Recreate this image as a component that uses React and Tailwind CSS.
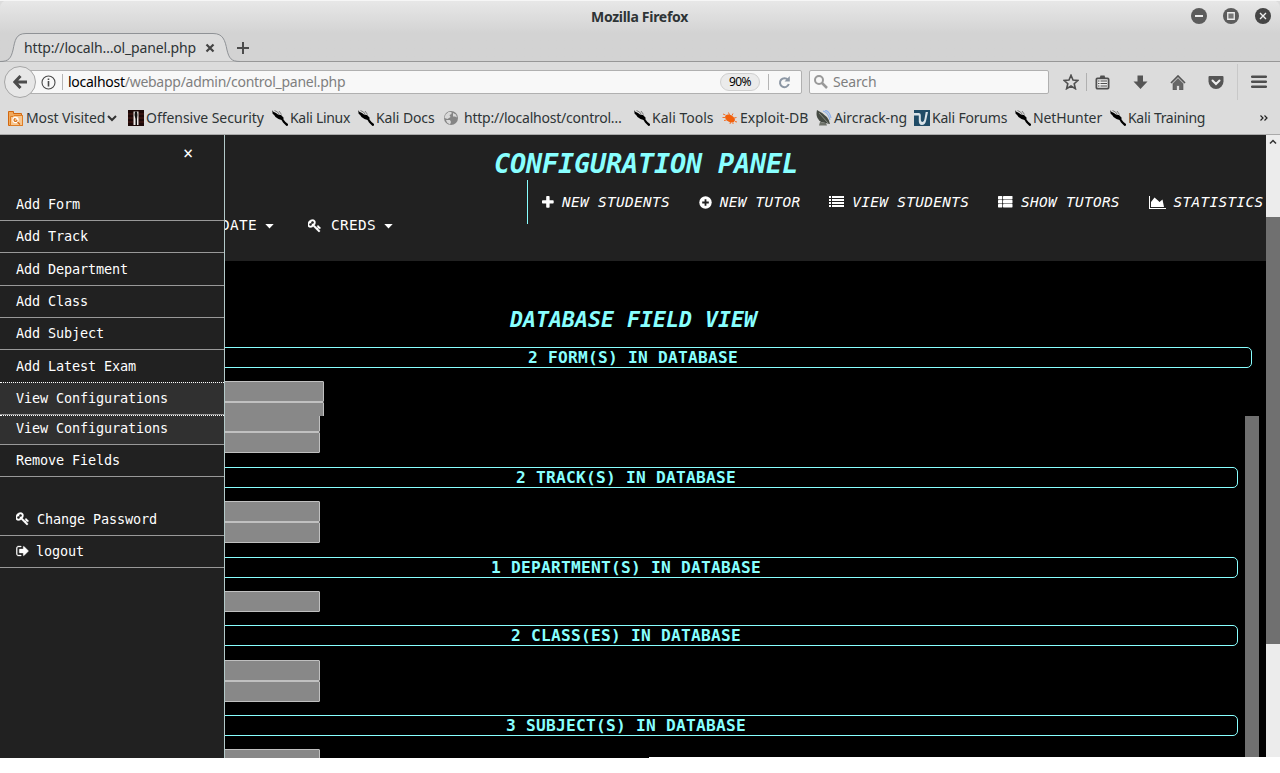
import React from "react";

const KEY =
  "M832 512q0-80-56-136t-136-56-136 56-56 136q0 42 19 83-41-19-83-19-80 0-136 56t-56 136 56 136 136 56 136-56 56-136q0-42-19-83 41 19 83 19 80 0 136-56t56-136zm851 704q0 17-49 66t-66 49q-9 0-28.5-16t-36.5-33-38.5-40-24.5-26l-96 96 220 220q28 28 28 68 0 42-39 81t-81 39q-40 0-68-28l-671-671q-176 131-365 131-163 0-265.5-102.5t-102.5-265.5q0-160 95-313t248-248 313-95q163 0 265.5 102.5t102.5 265.5q0 189-131 365l355 355 96-96q-3-3-26-24.5t-40-38.5-33-36.5-16-28.5q0-17 49-66t66-49q13 0 23 10 6 6 46 44.5t82 79.5 86.5 86 73 78 28.5 41z";
const SIGN_OUT =
  "M704 1440q0 4 1 20t.5 26.5-3 23.5-10 19.5-20.5 6.5h-320q-119 0-203.5-84.5t-84.5-203.5v-704q0-119 84.5-203.5t203.5-84.5h320q13 0 22.5 9.5t9.5 22.5q0 4 1 20t.5 26.5-3 23.5-10 19.5-20.5 6.5h-320q-66 0-113 47t-47 113v704q0 66 47 113t113 47h312l11.5 1 11.5 3 8 5.5 7 9 2 13.5zm928-544q0 26-19 45l-544 544q-19 19-45 19t-45-19-19-45v-288h-448q-26 0-45-19t-19-45v-384q0-26 19-45t45-19h448v-288q0-26 19-45t45-19 45 19l544 544q19 19 19 45z";

const ICONS = {
  plus: (
    <svg width="12" height="12" viewBox="0 0 12 12" fill="currentColor"><path d="M4.2 .8q0-.8.8-.8h1.8q.8 0 .8.8v3.4h3.3q.8 0 .8.8v1.8q0 .8-.8.8H7.600v3.300q0 .8-.8.8H5q-.8 0-.8-.8V7.600H.8Q0 7.600 0 6.800V5q0-.8.800-.8h3.400z" /></svg>
  ),
  circle: (
    <svg width="13" height="13" viewBox="0 0 13 13"><circle cx="6.500" cy="6.500" r="6.200" fill="currentColor" /><path d="M6.500 3.200v6.600M3.200 6.500h6.600" stroke="#212121" strokeWidth="1.800" /></svg>
  ),
  list: (
    <svg width="15" height="12" viewBox="0 0 15 12" fill="currentColor"><path d="M0 0h2v2H0zM3 0h12v2H3zM0 3h2v2H0zM3 3h12v2H3zM0 6h2v2H0zM3 6h12v2H3zM0 9h2v2H0zM3 9h12v2H3z" /></svg>
  ),
  thlist: (
    <svg width="15" height="12" viewBox="0 0 15 12" fill="currentColor"><rect width="4.300" height="3.400" rx=".6" /><rect x="5" width="9.500" height="3.400" rx=".6" /><rect y="4" width="4.300" height="3.400" rx=".6" /><rect x="5" y="4" width="9.500" height="3.400" rx=".6" /><rect y="8" width="4.300" height="3.400" rx=".6" /><rect x="5" y="8" width="9.500" height="3.400" rx=".6" /></svg>
  ),
  chart: (
    <svg width="17" height="13" viewBox="0 0 17 13" fill="currentColor"><path d="M0 0h1v12h16v1H0zM2 11V6l3.500-4.500 3.500 3 1.500 1.500L13.500 3.500 15 11z" /></svg>
  ),
};

const NAV = [
  ["plus", "NEW STUDENTS", "w-5"],
  ["circle", "NEW TUTOR", "w-[21px]"],
  ["list", "VIEW STUDENTS", "w-[23px]"],
  ["thlist", "SHOW TUTORS", "w-[23px]"],
  ["chart", "STATISTICS", "w-[25px]"],
];

function Key() {
  return <svg width="14" height="14" viewBox="64 64 1792 1792" fill="currentColor" stroke="currentColor" strokeWidth="50"><path d={KEY} /></svg>;
}

function Caret() {
  return <svg width="9" height="5" viewBox="0 0 9 5" fill="currentColor"><path d="M.3 0h8.400L4.500 4.600z" /></svg>;
}

function Dragon() {
  return (
    <svg width="16" height="16" viewBox="0 0 16 16"><path d="M0 0l1 1.500 3 1.500 2 1.500 3 .500 2.500 2.500v2l2 2.500 2.500 2v1.500l-1.500.500-3.500-3.500-1.500-2.500-3-1-3-2-1-1.500-2-2L.5 2.500z" fill="#000" /><path d="M2.500 .5l3 1.500 1.500 2M7 1l2.500 3.500" stroke="#555" strokeWidth=".7" fill="none" /></svg>
  );
}

const FAV = {
  folder: (
    <svg width="16" height="16" viewBox="0 0 16 16"><path d="M.5 1.500h5v2h8v2h1v10H.5z" fill="#f0a95c" stroke="#d2670f" /><path d="M2.500 6.500H5l1-1h8.500v10h-12z" fill="#f7c58e" stroke="#de7d24" /><circle cx="7.500" cy="10" r="2.500" fill="#f7c58e" stroke="#fff" strokeWidth="1.300" /><path d="M7.500 8.500a1.500 1.500 0 1 0 1.500 1.500M9.500 12l2.500 2.500" stroke="#d2670f" strokeWidth="1.100" fill="none" /></svg>
  ),
  offsec: (
    <svg width="16" height="16" viewBox="0 0 16 16"><path d="M0 0h16v16H0z" fill="#1c0807" /><path d="M0 4h5M11 4h5M0 8h5M11 8h5M0 12h5M11 12h5" stroke="#4b1a17" /><path d="M5.500 1.500h5V15h-5z" fill="#efe8e6" /><path d="M7 1.500h2l.5 3.500L9 9v6H7.500V9L6.500 5z" fill="#111" /></svg>
  ),
  kali: <Dragon />,
  globe: (
    <svg width="16" height="16" viewBox="0 0 16 16"><circle cx="8" cy="8" r="7" fill="#858585" /><path d="M2.500 4.500l3-2.500 3 0 0 2-2 1 1 2-3 2-3-1zM10 3l3 1.500 1 3-2-1-2 0zM3 10l4 0 1 2-1 2.500-3-2z" fill="#d8d8d8" /></svg>
  ),
  exploit: (
    <svg width="16" height="16" viewBox="0 0 16 16"><ellipse cx="8" cy="8.500" rx="5.300" ry="3.400" transform="rotate(28 8 8.500)" fill="#f2600c" /><path d="M3.500 5L1 4M3 7.500H.5M4.500 10l-2.500.5M7.500 5L6.500 2.500M10 5.500l1-2M12 8l2.500-.500M13 11.500l2 .500M8.500 12L8 14M11 12.500v1.500" stroke="#f2702a" strokeWidth="1" /></svg>
  ),
  aircrack: (
    <svg width="16" height="16" viewBox="0 0 16 16"><path d="M1 0q-2 8 4 12l9 2Q13 6 1 0z" fill="#454a42" /><path d="M4 12l-1 3.500h8L10 13z" fill="#6d7168" /><path d="M7 1q5 1 7 9M9 0q5 2 6 8" stroke="#8fb1ea" strokeWidth="1.200" fill="none" /><path d="M3 3l9 10" stroke="#9a9d94" strokeWidth=".8" /></svg>
  ),
  forums: (
    <svg width="16" height="16" viewBox="0 0 16 16"><path d="M0 0h16v16H0z" fill="#1f4b66" /><path d="M0 3h5q2 0 1.800 2.500V9q0 3 1.700 3 1.500 0 2-3l1.200-7H14l-2 9q-1 4-4 4-3.500 0-3.200-5V5.500H0z" fill="#d8e2e8" /></svg>
  ),
};

const BOOKMARKS = [
  ["folder", "Most Visited", "w-[120px]", "tracking-[-0.1px]", "gap-[2px]"],
  ["offsec", "Offensive Security", "w-[144px]", "tracking-[-0.04px]", "gap-[2px]"],
  ["kali", "Kali Linux", "w-[86px]", "tracking-[-0.3px]", "gap-[2px]"],
  ["kali", "Kali Docs", "w-[85px]", "tracking-[-0.1px]", "gap-[2px]"],
  ["globe", "http://localhost/control…", "w-[191px]", "tracking-[-0.23px]", "gap-[5px]"],
  ["kali", "Kali Tools", "w-[88px]", "tracking-[0px]", "gap-[2px]"],
  ["exploit", "Exploit-DB", "w-[94px]", "tracking-[0px]", "gap-[2px]"],
  ["aircrack", "Aircrack-ng", "w-[98px]", "tracking-[-0.1px]", "gap-[2px]"],
  ["forums", "Kali Forums", "w-[101px]", "tracking-[-0.2px]", "gap-[2px]"],
  ["kali", "NetHunter", "w-[95px]", "tracking-[-0.1px]", "gap-[2px]"],
  ["kali", "Kali Training", "w-[149px]", "tracking-[-0.3px]", "gap-[2px]"],
];

function Chrome() {
  return (
    <header className="h-[135px] shrink-0 border-b border-[#a9a9a9] bg-[#dcdcdc] text-[14px] text-[#2e3436]">
      <div className="h-[62px] rounded-t-lg border-b border-[#979797] bg-linear-to-b from-[#e8e8e8] to-[#d3d3d3] to-55%">
        <div className="flex h-[33px] items-center border-t border-[#f6f6f6] pb-[2px]">
          <div className="w-[591px]" />
          <div className="w-[600px] text-[14px] font-bold tracking-[-0.3px]">Mozilla Firefox</div>
          <div className="flex gap-4">
            <svg width="16" height="16" viewBox="0 0 16 16"><circle cx="8" cy="8" r="8" fill="#5c5c5c" /><path d="M4 8h8" stroke="#eee" strokeWidth="2" /></svg>
            <svg width="16" height="16" viewBox="0 0 16 16"><circle cx="8" cy="8" r="8" fill="#5c5c5c" /><path d="M4.750 4.750h6.500v6.500h-6.500z" stroke="#eee" strokeWidth="1.300" fill="#777" /></svg>
            <svg width="16" height="16" viewBox="0 0 16 16"><circle cx="8" cy="8" r="8" fill="#454545" /><path d="M5 5l6 6M11 5l-6 6" stroke="#eee" strokeWidth="1.400" /></svg>
          </div>
        </div>
        <div className="relative flex h-[29px] items-center">
          <svg className="absolute left-0 top-0" width="240" height="29" viewBox="0 0 240 29">
            <path d="M0 28.500C9 28.500 11 25 13 17C15 7 16 .5 26 .5H213C223 .5 225 7 227 17C229 25 231 28.500 240 28.500" fill="#dcdcdc" stroke="#8f9296" />
          </svg>
          <div className="relative w-[205px] whitespace-pre pl-6 tracking-[-0.16px]">http://localh…ol_panel.php</div>
          <svg className="relative" width="10" height="10" viewBox="0 0 10 10"><path d="M1.500 1.500l7 7M8.500 1.500l-7 7" stroke="#444" strokeWidth="2.200" /></svg>
          <svg className="relative ml-[22px]" width="12" height="12" viewBox="0 0 12 12"><path d="M6 0v12M0 6h12" stroke="#4c4c4c" strokeWidth="2" /></svg>
        </div>
      </div>
      <div className="flex h-[40px] items-center pl-1">
        <div className="z-10 flex size-8 shrink-0 items-center justify-center rounded-full border border-[#a6a6a6] bg-[#e7e7e7]">
          <svg width="14" height="14" viewBox="0 0 14 14"><path d="M7.500 1L1.800 7l5.700 6M2 7h12" stroke="#4c4c4c" strokeWidth="3" fill="none" /></svg>
        </div>
        <div className="-ml-3 flex h-6 w-[778px] items-center rounded-r-[2px] border border-[#b0b0b0] bg-[#f8f8f8] pl-4">
          <svg width="15" height="15" viewBox="0 0 15 15" fill="none" stroke="#4a4a4a"><circle cx="7.500" cy="7.500" r="6.500" strokeWidth="1.100" /><path d="M7.500 6v5.500M7.500 3.500v1.600" strokeWidth="1.600" /></svg>
          <div className="ml-[6px] h-4 w-px bg-[#b5b5b5]" />
          <div className="ml-[5px] w-[652px] pb-[2px] text-[#7f7f7f] tracking-[-0.27px]"><span className="text-black">localhost</span>/webapp/admin/control_panel.php</div>
          <div className="flex h-[18px] w-10 items-center justify-center rounded-full border border-[#d0d0d0] bg-[#ebebeb] text-[12px] tracking-[-0.5px] text-black">90%</div>
          <div className="ml-2 h-4 w-px bg-[#b5b5b5]" />
          <svg className="ml-[9px]" width="13" height="13" viewBox="0 0 13 13"><path d="M10 3.800A4.500 4.500 0 1 0 10.800 8" stroke="#8c97a4" strokeWidth="2" fill="none" /><path d="M11.800 0v5.500H6.500z" fill="#8c97a4" /></svg>
        </div>
        <div className="ml-[7px] flex h-6 w-[240px] shrink-0 items-center rounded-[2px] border border-[#b0b0b0] bg-[#f8f8f8] pl-1">
          <svg width="14" height="14" viewBox="0 0 14 14" fill="none" stroke="#999" ><circle cx="5" cy="5" r="4" strokeWidth="2" /><path d="M8 8l5 5" strokeWidth="2.500" /></svg>
          <span className="ml-[5px] pb-[2px] tracking-[-0.15px] text-[#7f7f7f]">Search</span>
        </div>
        <svg className="ml-[14px] shrink-0" width="16" height="16" viewBox="0 0 16 16"><path d="M8 1.300l2 4.700 5 .4-3.800 3.300 1.200 5L8 12l-4.400 2.700 1.200-5L1 6.400 6 6z" fill="none" stroke="#4f4f4f" strokeWidth="1.600" /></svg>
        <div className="ml-[7px] h-[18px] w-px bg-[#b0b0b0]" />
        <svg className="ml-2 shrink-0" width="15" height="15" viewBox="0 0 15 15"><rect x="1.400" y="3.400" width="12.200" height="10.200" rx="1" fill="#eee" stroke="#4f4f4f" strokeWidth="1.800" /><path d="M4.500 3.500L5.500 .5h4l1 3z" fill="#4f4f4f" /><path d="M3 6h1.500M5.500 6H12M3 8.500h1.500M5.500 8.500H12M3 11h1.500M5.500 11H12" stroke="#4f4f4f" strokeWidth="1.100" /></svg>
        <svg className="ml-[23px] shrink-0" width="15" height="15" viewBox="0 0 15 15"><path d="M4.500 .5h5.500v6h4.500l-7 7.500-7-7.500h4z" fill="#555" /></svg>
        <svg className="ml-[22px] shrink-0" width="16" height="15" viewBox="0 0 16 15"><path d="M1 8l7-7 7 7" fill="none" stroke="#555" strokeWidth="1.700" /><path d="M3 8.500l5-5 5 5V15H9.500v-4.500h-3V15H3z" fill="#666" stroke="#555" strokeWidth=".6" /></svg>
        <svg className="ml-[22px] shrink-0" width="16" height="15" viewBox="0 0 16 15"><path d="M1.500 1h13q1 0 1 1v4.500a7.500 7.500 0 0 1-15 0V2q0-1 1-1z" fill="#555" /><path d="M4.500 5.500L8 9l3.500-3.500" fill="none" stroke="#eee" strokeWidth="2" strokeLinecap="round" /></svg>
        <div className="ml-[13px] h-9 w-px bg-[#c8c8c8]" />
        <svg className="ml-[13px] shrink-0" width="16" height="14" viewBox="0 0 16 14"><path d="M1.200 1.700h13.600M1.200 6.700h13.600M1.200 11.700h13.600" stroke="#4f4f4f" strokeWidth="2.600" strokeLinecap="round" /></svg>
      </div>
      <div className="flex h-[32px] items-center whitespace-nowrap pl-2">
        {BOOKMARKS.map(([icon, label, width, tracking, gap]) => (
          <div key={label} className={`flex shrink-0 items-center ${width} ${gap}`}>
            <span className="shrink-0">{FAV[icon]}</span>
            <span className={`pb-[2px] ${tracking}`}>{label}</span>
            {icon === "folder" && <svg className="shrink-0" width="10" height="7" viewBox="0 0 10 7"><path d="M1 1l4 4 4-4" fill="none" stroke="#333" strokeWidth="2" /></svg>}
          </div>
        ))}
        <svg width="10" height="8" viewBox="0 0 10 8"><path d="M1.500 1.500L4 4 1.500 6.500M5.500 1.500L8 4 5.500 6.500" fill="none" stroke="#222" strokeWidth="1.200" /></svg>
      </div>
    </header>
  );
}

function Item({ children, className }) {
  return <div className={`flex items-center border-b border-[#999] pl-4 ${className}`}>{children}</div>;
}

function Sidebar() {
  return (
    <aside className="absolute inset-y-0 left-0 z-10 w-[225px] border-r border-[#b3c9c9] bg-[#212121] text-[13.5px] leading-4 tracking-[-0.127px] text-white">
      <div className="flex h-[53px] pl-[183px] pt-[10px] text-[17px]">×</div>
      <nav>
        <Item className="h-[33px]">Add Form</Item>
        <Item className="h-[32px] pb-px">Add Track</Item>
        <Item className="h-[33px]">Add Department</Item>
        <Item className="h-[32px] pb-px">Add Class</Item>
        <Item className="h-[32px] pb-px">Add Subject</Item>
        <div className="flex h-8 items-center pl-4">Add Latest Exam</div>
        <div className="h-[34px] border-y border-dotted border-white bg-[#303030]">
          <Item className="h-8 pb-px">View Configurations</Item>
        </div>
        <Item className="h-[29px] bg-[#303030] pb-1">View Configurations</Item>
        <Item className="h-[32px] pb-px">Remove Fields</Item>
      </nav>
      <Item className="mt-[27px] h-8 pb-px"><Key /><span className="ml-[7px]">Change Password</span></Item>
      <Item className="h-8 pb-px"><svg width="14" height="14" viewBox="130 0 1600 1792" fill="currentColor" stroke="currentColor" strokeWidth="40"><path d={SIGN_OUT} /></svg><span className="ml-[6px]">logout</span></Item>
    </aside>
  );
}

function Heading({ children }) {
  return (
    <h3 className="h-[21px] rounded-[5px] border border-[#88ffff] text-center text-[16.200px] font-bold leading-[19px] tracking-[0.248px] text-[#88ffff]">
      {children}
    </h3>
  );
}

function Field() {
  return <div className="h-[21px] rounded-r-[1px] border border-[#c0c0c0] bg-[#888]" />;
}

function Section({ title, rows, className, gap }) {
  return (
    <section className={className}>
      <Heading>{title}</Heading>
      <div className={`w-[306px] ${gap}`}>
        {Array.from({ length: rows }, (_, i) => <Field key={i} />)}
      </div>
    </section>
  );
}

export default function App() {
  return (
    <div className="flex h-[773px] w-[1280px] flex-col overflow-hidden bg-white font-['Noto_Sans','Open_Sans',sans-serif]">
      <Chrome />
      <main className="relative flex h-[623px] shrink-0 overflow-hidden bg-black font-['DejaVu_Sans_Mono',monospace]">
        <Sidebar />
        <div className="flex w-[1266px] flex-col">
          <div className="h-[126px] shrink-0 bg-[#212121] text-[14.400px] text-white">
            <h1 className="h-[45px] pl-[494px] pt-[11px] text-[27px] font-bold italic leading-9 tracking-[-0.255px] text-[#88ffff]">CONFIGURATION PANEL</h1>
            <div className="ml-[527px] flex h-11 items-center whitespace-nowrap border-l border-[#88ffff] italic leading-5 tracking-[0.331px]">
              {NAV.map(([icon, label, width]) => (
                <div key={label} className="flex shrink-0 items-center pl-[14px] pr-[14.700px]">
                  <span className={`shrink-0 ${width}`}>{ICONS[icon]}</span>{label}
                </div>
              ))}
            </div>
            <div className="-mt-2 flex h-5 items-center pl-[203px] tracking-[0.331px]">
              UPDATE<span className="ml-[8px]"><Caret /></span>
              <span className="ml-[34px] mr-[9px]"><Key /></span>CREDS<span className="ml-[8px]"><Caret /></span>
            </div>
          </div>
          <h2 className="mt-[42px] h-[44px] shrink-0 pl-[510px] text-[21.600px] font-bold italic leading-[33px] tracking-[-0.004px] text-[#88ffff]">DATABASE FIELD VIEW</h2>
          <div className="ml-[14px] h-[69px] w-[1238px] shrink-0 overflow-hidden">
            <Heading>2 FORM(S) IN DATABASE</Heading>
            <div className="mt-[13px] w-[310px]"><Field /><Field /></div>
          </div>
          <div className="ml-[14px] flex h-[342px] w-[1245px] overflow-hidden">
            <div className="-mt-[5px] w-[1224px] shrink-0">
              <div className="w-[306px]"><Field /><Field /></div>
              <Section className="mt-[14px]" gap="mt-[13px]" title="2 TRACK(S) IN DATABASE" rows={2} />
              <Section className="mt-[14px]" gap="mt-[13px]" title="1 DEPARTMENT(S) IN DATABASE" rows={1} />
              <Section className="mt-[13px]" gap="mt-[14px]" title="2 CLASS(ES) IN DATABASE" rows={2} />
              <Section className="mt-[13px]" gap="mt-[13px]" title="3 SUBJECT(S) IN DATABASE" rows={1} />
            </div>
            <div className="ml-[7px] w-[14px] bg-[#707070]" />
          </div>
        </div>
        <div className="w-[14px] bg-[#ececec]">
          <div className="flex h-[82px] justify-center pt-1"><svg width="8" height="6" viewBox="0 0 8 6"><path d="M1 4.500l3-3 3 3" stroke="#333" strokeWidth="1.500" fill="none" /></svg></div>
          <div className="h-[427px] bg-[#707070]" />
        </div>
        <div className="absolute bottom-0 right-0 h-px w-[631px] bg-white" />
      </main>
    </div>
  );
}
